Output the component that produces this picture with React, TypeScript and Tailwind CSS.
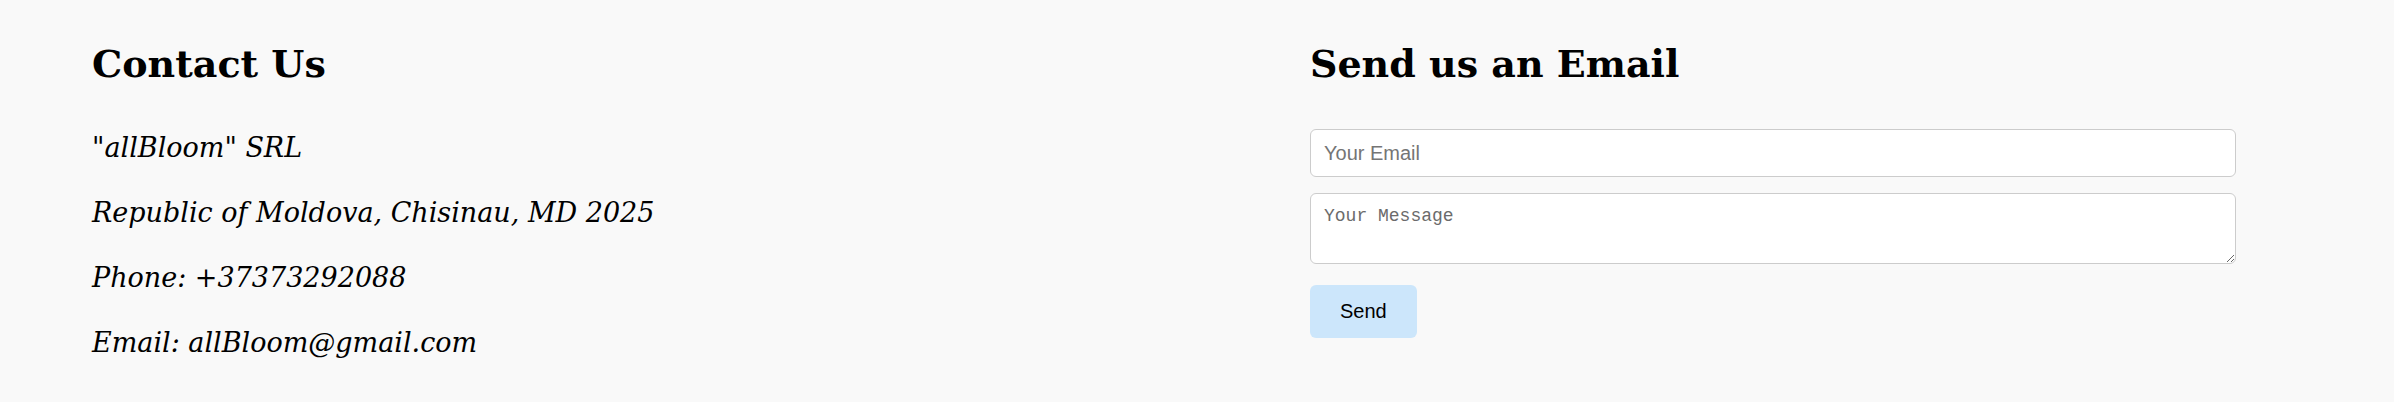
// App.tsx
const serif = "font-['DejaVu_Serif',serif]";

const contactLines = [
  '"allBloom" SRL',
  "Republic of Moldova, Chisinau, MD 2025",
  "Phone: +37373292088",
  "Email: allBloom@gmail.com",
];

const App = () => {
  return (
    <div className="min-h-screen bg-[#f9f9f9] text-black">
      <section className="flex pl-[92px] pt-[42px]">
        {/* Contact info */}
        <div className="w-[1218px]">
          <h2 className={`${serif} text-[38px] leading-[44px] font-bold`}>
            Contact Us
          </h2>
          <div className="mt-[29px]">
            {contactLines.map((line) => (
              <p
                key={line}
                className={`${serif} text-[27px] leading-[65px] italic`}
              >
                {line}
              </p>
            ))}
          </div>
        </div>

        {/* Email form */}
        <div className="w-[926px]">
          <h2 className={`${serif} text-[38px] leading-[44px] font-bold`}>
            Send us an Email
          </h2>
          <form
            className="mt-[43px] flex flex-col items-start"
            onSubmit={(e) => e.preventDefault()}
          >
            <input
              type="email"
              placeholder="Your Email"
              className="h-[48px] w-full rounded-[6px] border border-[#cccccc] bg-white px-[13px] font-['Liberation_Sans',sans-serif] text-[20px] placeholder:text-[#757575] focus:outline-none"
            />
            <textarea
              placeholder="Your Message"
              className="mt-[16px] block h-[71px] w-full rounded-[6px] border border-[#cccccc] bg-white px-[13px] py-[11px] font-['Liberation_Mono',monospace] text-[18px] leading-[22px] placeholder:text-[#6b6b6b] focus:outline-none"
            />
            <button
              type="submit"
              className="mt-[21px] rounded-[6px] bg-[#cce6fb] px-[30px] py-[15px] font-['Liberation_Sans',sans-serif] text-[20px] leading-[23px] text-black"
            >
              Send
            </button>
          </form>
        </div>
      </section>
    </div>
  );
};

export default App;
